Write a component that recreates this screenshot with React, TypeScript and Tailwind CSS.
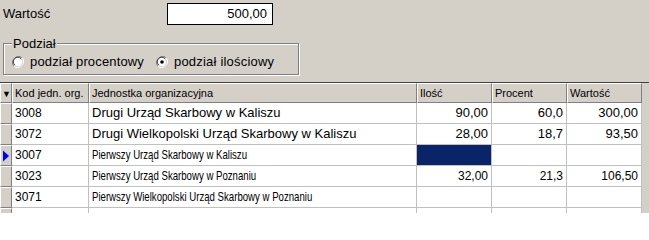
const rows = [
  { kod: '3008', name: 'Drugi Urząd Skarbowy w Kaliszu', ilosc: '90,00', procent: '60,0', wartosc: '300,00', big: true },
  { kod: '3072', name: 'Drugi Wielkopolski Urząd Skarbowy w Kaliszu', ilosc: '28,00', procent: '18,7', wartosc: '93,50', big: true },
  { kod: '3007', name: 'Pierwszy Urząd Skarbowy w Kaliszu', ilosc: '', procent: '', wartosc: '', current: true },
  { kod: '3023', name: 'Pierwszy Urząd Skarbowy w Poznaniu', ilosc: '32,00', procent: '21,3', wartosc: '106,50' },
  { kod: '3071', name: 'Pierwszy Wielkopolski Urząd Skarbowy w Poznaniu', ilosc: '', procent: '', wartosc: '' },
  { kod: '', name: '', ilosc: '', procent: '', wartosc: '' },
]

const cols = 'grid grid-cols-[12px_77px_328px_75px_75px_75px]'

function Radio({ checked }: { checked?: boolean }) {
  return (
    <svg width="12" height="12" viewBox="0 0 12 12" className="shrink-0">
      <path d="M10.2 1.8A6 6 0 0 0 1.8 10.2" fill="none" stroke="#808080" strokeWidth="1" />
      <path d="M1.8 10.2A6 6 0 0 0 10.2 1.8" fill="none" stroke="#ffffff" strokeWidth="1" />
      <circle cx="6" cy="6" r="4.5" fill="#ffffff" stroke="#d4d0c8" strokeWidth="0.8" />
      <path d="M9 2.6A4.5 4.5 0 0 0 2.6 9" fill="none" stroke="#404040" strokeWidth="1" />
      {checked && <circle cx="6" cy="6" r="1.8" fill="#000" />}
    </svg>
  )
}

function HeaderCell({ children }: { children?: React.ReactNode }) {
  return (
    <div className="h-[20px] bg-[#d4d0c8] border-t border-l border-t-white border-l-white border-r border-b border-r-[#808080] border-b-[#808080] pl-[2px] text-[11px] leading-[18px] overflow-hidden whitespace-nowrap">
      {children}
    </div>
  )
}

export default function App() {
  return (
    <div className="w-[649px] h-[213px] overflow-hidden bg-[#d4d0c8] text-black font-['Liberation_Sans',Arial,sans-serif]">
      <div className="flex items-center h-[27px] pt-[1px]">
        <span className="pl-[3px] w-[167px] text-[13px]">Wartość</span>
        <div className="w-[106px] h-[22px] bg-white border border-black text-right pr-[5px] text-[13px] leading-[20px]">
          500,00
        </div>
      </div>

      {/* group box */}
      <div className="ml-[3px] mt-[16px] w-[296px] h-[32px] border border-[#808080] shadow-[inset_1px_1px_0_#fff,1px_1px_0_#fff]">
        <div className="-mt-[7px] ml-[8px] w-fit px-[1px] bg-[#d4d0c8] text-[13px] leading-[13px]">Podział</div>
        <div className="flex items-center h-[20px] mt-[2px] pl-[8px] text-[13px]">
          <Radio />
          <span className="ml-[6px] mr-[12px] tracking-[0.15px]">podział procentowy</span>
          <Radio checked />
          <span className="ml-[6px] tracking-[0.2px]">podział ilościowy</span>
        </div>
      </div>

      <div className="mt-[7px] border-t border-[#404040]">
        <div className={cols}>
          <HeaderCell>
            <span className="text-[9px] leading-[18px] -ml-[1px]">▼</span>
          </HeaderCell>
          <HeaderCell>Kod jedn. org.</HeaderCell>
          <HeaderCell>Jednostka organizacyjna</HeaderCell>
          <HeaderCell>Ilość</HeaderCell>
          <HeaderCell>Procent</HeaderCell>
          <HeaderCell>Wartość</HeaderCell>
        </div>
        {rows.map((r, i) => (
          <div key={i} className={cols + ' h-[21px]'}>
            <div className="bg-[#d4d0c8] border-t border-l border-t-white border-l-white border-r border-b border-r-[#808080] border-b-[#808080] flex items-center">
              {r.current && (
                <svg width="8" height="12" viewBox="0 0 8 12" className="ml-[1px]">
                  <path d="M1 0.5L7 6L1 11.5Z" fill="#0000ff" />
                </svg>
              )}
            </div>
            <div className="bg-white border-r border-b border-[#c0c0c0] pl-[3px] text-[12px] leading-[20px]">{r.kod}</div>
            <div className="bg-white border-r border-b border-[#c0c0c0] pl-[3px] text-[13px] leading-[20px] whitespace-nowrap overflow-hidden">
              {r.big ? r.name : <span className="inline-block origin-left scale-x-[0.74]">{r.name}</span>}
            </div>
            <div className={'border-r border-b border-[#c0c0c0] text-right pr-[3px] leading-[20px] ' + (r.current ? 'bg-[#0a246a]' : 'bg-white') + (r.big ? ' text-[13px]' : ' text-[12px]')}>
              {r.ilosc}
            </div>
            <div className={'bg-white border-r border-b border-[#c0c0c0] text-right pr-[3px] leading-[20px]' + (r.big ? ' text-[13px]' : ' text-[12px]')}>
              {r.procent}
            </div>
            <div className={'bg-white border-r border-b border-[#c0c0c0] text-right pr-[3px] leading-[20px]' + (r.big ? ' text-[13px]' : ' text-[12px]')}>
              {r.wartosc}
            </div>
          </div>
        ))}
      </div>
    </div>
  )
}
